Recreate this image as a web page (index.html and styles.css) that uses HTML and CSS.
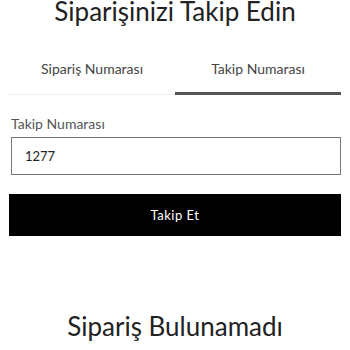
FILE: index.html
```html
<!DOCTYPE html>
<html lang="tr">
<head>
<meta charset="utf-8">
<link rel="stylesheet" href="styles.css">
</head>
<body>
<div class="page">
  <h1 class="title">Siparişinizi Takip Edin</h1>
  <div class="tabs">
    <div class="tab">Sipariş Numarası</div>
    <div class="tab active">Takip Numarası</div>
  </div>
  <form class="form">
    <label class="label">Takip Numarası</label>
    <div class="input">1277</div>
    <button class="btn" type="button">Takip Et</button>
  </form>
  <div class="empty">Sipariş Bulunamadı</div>
</div>
</body>
</html>
```
FILE: styles.css
```css
html, body { margin: 0; padding: 0; background: #fff; }
body { font-family: Lato, "Noto Sans", sans-serif; color: #222; width: 350px; height: 350px; overflow: hidden; }
.page { padding: 0 9px; }
.title { margin: -4px 0 0; font-size: 26px; font-weight: 400; text-align: center; line-height: 30px; color: #222; }
.tabs { display: flex; align-items: flex-start; margin-top: 31px; }
.tab { flex: 1; text-align: center; font-size: 14px; color: #444; height: 37px; line-height: 24px; border-bottom: 1px solid #eee; }
.tab.active { border-bottom: 3px solid #555; height: 35px; }
.form { display: flex; flex-direction: column; margin-top: 20px; }
.label { font-size: 14px; color: #555; padding-left: 2px; line-height: 18px; }
.input { margin-top: 4px; margin-left: 2px; height: 36px; border: 1px solid #777; font-size: 13px; line-height: 36px; padding-left: 13px; color: #222; }
.btn { margin-top: 19px; height: 42px; background: #000; color: #fff; border: 0; font-family: inherit; font-size: 13px; letter-spacing: 0.5px; }
.empty { margin-top: 74px; text-align: center; font-size: 26px; line-height: 32px; color: #222; }
```
